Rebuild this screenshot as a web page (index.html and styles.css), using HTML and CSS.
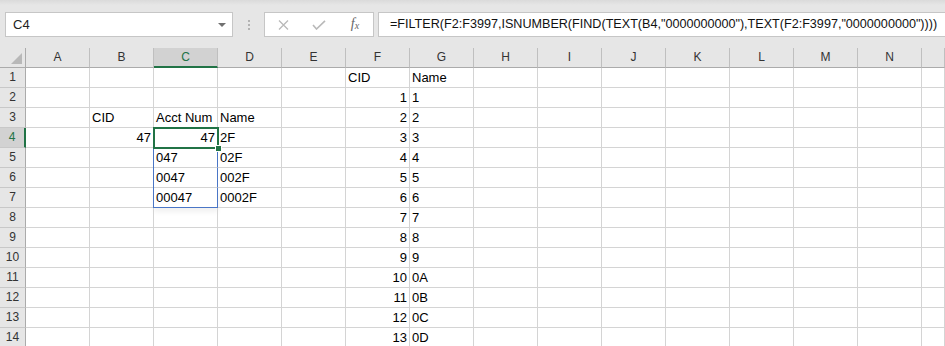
FILE: index.html
```html
<!DOCTYPE html>
<html lang="en">
<head>
    <meta charset="UTF-8">
    <title>Book1 - Excel</title>
    <link rel="stylesheet" href="styles.css">
</head>
<body>
    <div class="toolbar">
        <div class="namebox">
            <span>C4</span>
            <span class="caret"></span>
        </div>
        <div class="grip"><i></i><i></i><i></i></div>
        <div class="fx-buttons">
            <svg width="11" height="10" viewBox="0 0 11 10"><path d="M1 0.5 L10 9.5 M10 0.5 L1 9.5" stroke="#b9b9b9" stroke-width="1.3" fill="none"/></svg>
            <svg width="14" height="10" viewBox="0 0 14 10"><path d="M1 5 L4.5 9 L13 0.8" stroke="#b9b9b9" stroke-width="1.6" fill="none"/></svg>
            <span class="fx">f<sub>x</sub></span>
        </div>
        <div class="formula">=FILTER(F2:F3997,ISNUMBER(FIND(TEXT(B4,"0000000000"),TEXT(F2:F3997,"0000000000"))))</div>
    </div>

    <div class="sheet" id="sheet"></div>

    <script>
        const sheet = document.getElementById("sheet");
        // last entry is the partly visible column past N, its letter is off screen
        const cols = "ABCDEFGHIJKLMN".split("").concat([""]);
        const data = {
            1: { F: "CID", G: "Name" },
            2: { F: 1, G: "1" },
            3: { B: "CID", C: "Acct Num", D: "Name", F: 2, G: "2" },
            4: { B: 47, C: 47, D: "2F", F: 3, G: "3" },
            5: { C: "047", D: "02F", F: 4, G: "4" },
            6: { C: "0047", D: "002F", F: 5, G: "5" },
            7: { C: "00047", D: "0002F", F: 6, G: "6" },
            8: { F: 7, G: "7" },
            9: { F: 8, G: "8" },
            10: { F: 9, G: "9" },
            11: { F: 10, G: "0A" },
            12: { F: 11, G: "0B" },
            13: { F: 12, G: "0C" },
            14: { F: 13, G: "0D" }
        };
        const activeCol = "C";
        const activeRow = 4;
        const spill = [5, 6, 7];

        function add(cls, text) {
            const el = document.createElement("div");
            el.className = cls;
            if (text !== undefined) el.textContent = text;
            sheet.appendChild(el);
            return el;
        }

        add("corner");
        cols.forEach(function (c) {
            add("colhead" + (c === activeCol ? " on" : ""), c);
        });

        for (let r = 1; r <= 14; r++) {
            add("rowhead" + (r === activeRow ? " on" : ""), r);
            cols.forEach(function (c) {
                const v = (data[r] || {})[c];
                let cls = "cell";
                if (typeof v === "number") cls += " num";
                if (c === activeCol && r === activeRow) cls += " active";
                if (c === activeCol && spill.includes(r)) cls += " spill";
                if (c === activeCol && r === spill[spill.length - 1]) cls += " spill-end";
                add(cls, v === undefined ? "" : v);
            });
        }
    </script>
</body>
</html>
```

FILE: styles.css
```css
:root {
    --chrome: #e6e6e6;
    --grid: #d4d4d4;
    --green: #217346;
    --spill: #4a76c6;
}

body {
    margin: 0;
    background: #fff;
    overflow: hidden;
    font-family: "Liberation Sans", Arial, sans-serif;
}

/* formula bar */
.toolbar {
    height: 48px;
    box-sizing: border-box;
    padding-top: 12px;
    display: flex;
    align-items: flex-start;
    background: linear-gradient(#dadada, var(--chrome) 5px);
}

.namebox {
    margin-left: 5px;
    width: 228px;
    height: 25px;
    box-sizing: border-box;
    border: 1px solid #c6c6c6;
    background: #fff;
    display: flex;
    align-items: center;
    justify-content: space-between;
    padding: 0 6px 0 7px;
    font-size: 13px;
    color: #222;
}

.caret {
    border-left: 4px solid transparent;
    border-right: 4px solid transparent;
    border-top: 4px solid #707070;
}

.grip {
    width: 31px;
    padding-top: 8px;
    display: flex;
    flex-direction: column;
    align-items: center;
    gap: 2px;
}

.grip i {
    width: 2px;
    height: 2px;
    background: #b3b3b3;
}

.fx-buttons {
    width: 110px;
    height: 25px;
    box-sizing: border-box;
    border: 1px solid #c6c6c6;
    background: #fff;
    display: grid;
    grid-template-columns: repeat(3, 36px);
    justify-items: center;
    align-items: center;
}

.fx {
    font-family: "Liberation Serif", serif;
    font-style: italic;
    font-size: 14px;
    color: #666;
    line-height: 14px;
}

.fx sub {
    font-size: 10px;
    vertical-align: -1px;
}

.formula {
    flex: 1;
    min-width: 0;
    margin-left: 4px;
    height: 25px;
    box-sizing: border-box;
    border: 1px solid #c6c6c6;
    border-right: none;
    background: #fff;
    padding-left: 11px;
    font-size: 12.6px;
    line-height: 23px;
    color: #111;
    white-space: nowrap;
    overflow: hidden;
}

/* worksheet */
.sheet {
    display: grid;
    grid-template-columns: 26px repeat(14, 64px) 1fr;
    grid-auto-rows: 20px;
    overflow: hidden;
}

.corner,
.colhead,
.rowhead {
    background: var(--chrome);
    box-sizing: border-box;
    font-size: 12px;
    color: #333;
    text-align: center;
    line-height: 19px;
}

.corner {
    border-right: 1px solid #ababab;
    border-bottom: 1px solid #ababab;
    display: flex;
    align-items: flex-end;
    justify-content: flex-end;
    padding: 0 3px 3px 0;
}

.corner::after {
    content: "";
    width: 11px;
    height: 11px;
    background: #b8b8b8;
    clip-path: polygon(100% 0, 100% 100%, 0 100%);
}

.colhead {
    border-right: 1px solid #bfbfbf;
    border-bottom: 1px solid #ababab;
}

.colhead.on {
    background: #d2d2d2;
    color: var(--green);
    border-bottom: 2px solid var(--green);
    line-height: 18px;
}

.rowhead {
    border-right: 1px solid #ababab;
    border-bottom: 1px solid #c8c8c8;
}

.rowhead.on {
    background: #d2d2d2;
    color: var(--green);
    border-right: 2px solid var(--green);
}

.cell {
    box-sizing: border-box;
    border-right: 1px solid var(--grid);
    border-bottom: 1px solid var(--grid);
    padding: 0 2px;
    font-size: 13px;
    line-height: 19px;
    color: #000;
    white-space: nowrap;
}

.cell.num {
    text-align: right;
}

.cell.active {
    position: relative;
    z-index: 2;
    outline: 2px solid var(--green);
    outline-offset: -1px;
}

.cell.active::after {
    content: "";
    position: absolute;
    right: -5px;
    bottom: -5px;
    width: 5px;
    height: 5px;
    background: var(--green);
    border: 1px solid #fff;
}

.cell.spill {
    border-right-color: var(--spill);
    box-shadow: -1px 0 0 var(--spill);
}

.cell.spill-end {
    border-bottom-color: var(--spill);
    box-shadow: -1px 0 0 var(--spill), 0 4px 5px rgba(0, 0, 0, 0.06);
}
```
